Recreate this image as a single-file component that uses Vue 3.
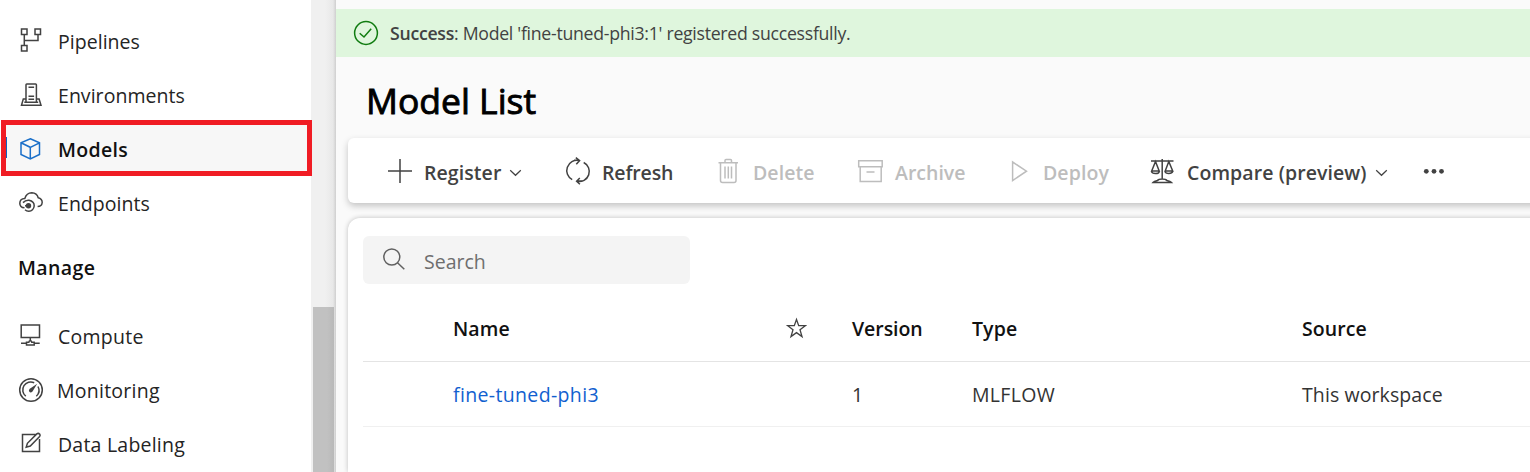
<script setup>
const nav = [
  { label: 'Pipelines', icon: 'pipelines', box: '18 14 28 54' },
  { label: 'Environments', icon: 'environments', box: '18 68 28 54' },
  { label: 'Models', icon: 'models', box: '18 122 28 54', active: true },
  { label: 'Endpoints', icon: 'endpoints', box: '18 176 28 54' },
]
const manage = [
  { label: 'Compute', icon: 'compute', box: '18 309 28 54' },
  { label: 'Monitoring', icon: 'monitoring', box: '18 363 28 54' },
  { label: 'Data Labeling', icon: 'labeling', box: '18 417 28 54' },
]
const paths = {
  pipelines: 'M21.5 29h5.5v5.5h-5.5zM35 29h5.5v5.5H35zM21.5 45.5h5.5v5.5h-5.5zM24.3 34.5v11M24.3 40.5H38v-6',
  environments: 'M26 102V84.800q0-.8.8-.8h8.800q.8 0 .8.800V102M28.500 87.200h5.600M28.500 96.200h5.600M28.500 99.200h5.600M26 99H23.300L21.500 105.300H41L39.100 99H36.400M24.300 102.300H38.200',
  models: 'M30.300 138.800L39.500 142.800V154.500L30.300 159L21 154.500V142.800zM21 142.800L30.300 147.300L39.500 142.800M30.300 147.300V159',
  compute: 'M21.200 325h18.300v12.500H21.200zM30.300 337.500v3.500M21 343.300h5.500M34.200 343.300h5.500M26.500 345V342.300h2.300q.2-1.500 1.500-1.500t1.500 1.500h2.400V345z',
  labeling: 'M36.500 434.500H22.500V451.500H39.500V439M26.200 447.200L27.400 443.300L36.800 433.900Q38.300 432.700 39.800 434.200Q40.500 435.600 39.600 436.600L30.300 446z',
}
</script>

<template>
  <div class="page">
    <aside class="side">
      <nav class="group">
        <a v-for="n in nav" :key="n.label" class="item" :class="[n.icon, { active: n.active }]">
          <svg width="28" height="54" :viewBox="n.box">
            <g v-if="n.icon === 'endpoints'">
              <path d="M24.500 207.800Q19.800 207.500 19.800 203.200Q19.900 198.800 24.800 198.500Q26.500 192.800 31.800 192.700Q37 192.900 38.200 197.700Q42.200 198.700 42.200 202.500Q41.800 206.500 37.600 206.500" />
              <path d="M23 202.600Q25.700 199.900 29 200.300Q34.300 201.300 34.200 206Q33.500 211 28.800 211.200Q26.500 211 25 209.700" />
              <path d="M25 205.800h3" />
              <circle class="dot" cx="28.500" cy="205.800" r="2.700" />
            </g>
            <path v-else :d="paths[n.icon]" />
          </svg>
          <span class="label">{{ n.label }}</span>
        </a>
      </nav>
      <h2 class="heading">Manage</h2>
      <nav class="group">
        <a v-for="n in manage" :key="n.label" class="item" :class="n.icon">
          <svg width="28" height="54" :viewBox="n.box">
            <g v-if="n.icon === 'monitoring'">
              <circle cx="31" cy="390" r="11.300" />
              <path d="M25.800 396.200A8 8 0 0 1 34.200 382.700M38 386.500A8 8 0 0 1 36.300 396.200" />
              <path class="dot" d="M37.200 383.800L32.500 391.500Q30.700 393.300 29.300 391.800Q28.200 390.300 29.800 388.800z" />
            </g>
            <path v-else :d="paths[n.icon]" />
          </svg>
          <span class="label">{{ n.label }}</span>
        </a>
      </nav>
    </aside>
    <div class="track"><div class="thumb"></div></div>

    <main class="main">
      <div class="banner">
        <svg width="26" height="26" viewBox="353 20 26 26">
          <circle cx="366" cy="33" r="11.400" />
          <path d="M359.700 33.300L364 37L371.200 28.800" />
        </svg>
        <p class="msg"><b>Success</b>: Model 'fine-tuned-phi3:1' registered successfully.</p>
      </div>
      <h1 class="title">Model List</h1>

      <div class="toolbar">
        <div class="cmd register">
          <svg width="26" height="65" viewBox="387 138 26 65"><path d="M400 159v24M388 171h24" /></svg>
          <span>Register</span>
          <svg class="chev" width="13" height="8" viewBox="0 0 13 8"><path d="M1.200 1.200L6.500 6.300L11.800 1.200" /></svg>
        </div>
        <div class="cmd refresh">
          <svg width="26" height="65" viewBox="565 138 26 65">
            <path d="M572.200 179.700A10.300 10.300 0 0 1 579 160.500M574 160.300H579.300M575.800 157.600L579.600 160.600L576.300 164.300M583.700 162.500A10.050 10.050 0 0 1 577 181.300M576.800 181H582M579.800 178L576.600 181.200L579.900 184.300" />
          </svg>
          <span>Refresh</span>
        </div>
        <div class="cmd off delete">
          <svg width="26" height="65" viewBox="717 138 26 65">
            <path d="M718.500 162.800h19.500M725 162.500v-2q0-1 1-1h4.500q1 0 1 1v2M720.500 163v17.500q0 2 2 2h11.500q2 0 2-2V163M725 166.500v12M728.300 166.500v12M731.500 166.500v12" />
          </svg>
          <span>Delete</span>
        </div>
        <div class="cmd off archive">
          <svg width="27" height="65" viewBox="857 138 27 65">
            <path d="M858.700 160.700h23.500v6h-23.500zM860.200 166.700v14.800h21v-14.800M866.500 172h8" />
          </svg>
          <span>Archive</span>
        </div>
        <div class="cmd off deploy">
          <svg width="18" height="65" viewBox="1011 138 18 65"><path d="M1012.600 162v18.500L1026.500 171.200z" /></svg>
          <span>Deploy</span>
        </div>
        <div class="cmd compare">
          <svg width="26" height="65" viewBox="1149 138 26 65">
            <path d="M1151 161h22.500M1162.200 159v20M1155.500 161.500L1151.700 171H1159.200zM1168.800 161.500L1165.200 171H1172.700zM1151.500 171.300q.5 2.200 4 2.200t3.800-2.200M1165 171.300q.5 2.200 3.800 2.200t4-2.200M1153 182.400q1-1.200 4.500-1.900q1-1.500 4.700-1.500t4.700 1.500q3.500.7 4.600 1.900z" />
          </svg>
          <span>Compare (preview)</span>
          <svg class="chev" width="13" height="8" viewBox="0 0 13 8"><path d="M1.200 1.200L6.500 6.300L11.800 1.200" /></svg>
        </div>
        <div class="cmd">
          <svg class="more" width="24" height="65" viewBox="1423 138 24 65">
            <circle cx="1426.300" cy="171.300" r="2.400" /><circle cx="1434" cy="171.300" r="2.400" /><circle cx="1441.500" cy="171.300" r="2.400" />
          </svg>
        </div>
      </div>

      <section class="panel">
        <div class="search">
          <svg width="24" height="24" viewBox="382 247 24 24">
            <circle cx="391.800" cy="257" r="8" /><path d="M397.500 262.700L404.300 269.300" />
          </svg>
          <span class="ph">Search</span>
        </div>
        <div class="row head">
          <span class="name">Name</span>
          <span class="star">
            <svg width="22" height="22" viewBox="785 317 22 22">
              <path d="M796.500 319.500L798.700 325.700H805.300L800 329.800L802 336.600L796.500 332.600L791 336.600L793 329.800L787.700 325.700H794.300z" />
            </svg>
          </span>
          <span class="version">Version</span>
          <span class="type">Type</span>
          <span class="source">Source</span>
        </div>
        <div class="row body">
          <a class="name">fine-tuned-phi3</a>
          <span></span>
          <span class="version">1</span>
          <span class="type">MLFLOW</span>
          <span class="source">This workspace</span>
        </div>
      </section>
    </main>
  </div>
</template>

<style>
body { margin: 0; overflow: hidden; }
</style>

<style scoped>
.page {
  display: flex;
  width: 1530px;
  height: 472px;
  overflow: hidden;
  background: #fff;
  font-family: "Open Sans", "Noto Sans", sans-serif;
  font-size: 19.5px;
  color: #242424;
  white-space: nowrap;
}
svg { flex: none; fill: none; stroke: #424242; stroke-width: 1.5; }
.dot { fill: #424242; stroke: none; }
.side { width: 311px; flex: none; box-sizing: border-box; padding-top: 14px; }
.item { display: flex; height: 54px; line-height: 56px; padding-left: 18px; box-sizing: border-box; }
.item .label { margin-left: 12px; letter-spacing: 0.04px; }
.item.compute .label { letter-spacing: 0.25px; }
.item.monitoring .label { margin-left: 11px; letter-spacing: 0.25px; }
.item.labeling .label { letter-spacing: 0.22px; }
.active {
  margin: -2px 0 0 1px;
  width: 311px;
  height: 56px;
  padding-left: 12px;
  border: 5px solid #f01c24;
  background: linear-gradient(#0f62be, #0f62be) 0 12px / 1px 21px no-repeat #f7f7f7;
  position: relative;
  z-index: 1;
  line-height: 50px;
  font-weight: 600;
  color: #111;
}
.item.active .label { letter-spacing: 0.3px; }
.active svg { margin-top: -3px; stroke: #1a6fc9; }
.heading { margin: 10px 0 15px 18px; font-size: 19.5px; height: 54px; line-height: 56px; font-weight: 600; color: #111; letter-spacing: 0.4px; }
.track {
  width: 25px;
  flex: none;
  background: linear-gradient(90deg, transparent 14px, #e8e8e8 22px, #cfcfcf 25px) #f0f0f0;
}
.thumb { width: 21px; height: 165px; margin: 307px 0 0 2px; background: linear-gradient(90deg, #c1c1c1 14px, #b9b9b9); }
.main { flex: 1; min-width: 0; background: #fafafa; padding-top: 9px; box-sizing: border-box; }
.banner { display: flex; align-items: center; height: 48px; padding-left: 17px; background: #dff6dd; }
.banner svg { stroke: #107c10; }
.msg { margin: 0 0 0 11px; font-size: 17.7px; color: #424242; letter-spacing: -0.28px; }
.msg b { font-weight: 600; }
.title {
  margin: 20px 0 0 30px;
  height: 61px;
  line-height: 46px;
  font-size: 35.5px;
  font-weight: 400;
  -webkit-text-stroke: 0.9px #000;
  color: #000;
  letter-spacing: 0;
}
.toolbar {
  display: grid;
  grid-template-columns: 178px 152px 140px 154px 138px 274px 60px;
  height: 65px;
  margin: 0 -12px 0 12px;
  padding-left: 39px;
  border-radius: 6px 0 0 6px;
  background: #fff;
  box-shadow: 0 3px 7px rgba(0, 0, 0, 0.22);
}
.cmd { display: flex; line-height: 69px; font-weight: 600; color: #424242; letter-spacing: 0.08px; }
.cmd span { margin-left: 11px; }
.refresh { letter-spacing: -0.15px; }
.archive { letter-spacing: 0; }
.delete span { margin-left: 10px; }
.deploy span { margin-left: 14px; }
.compare span { margin-left: 12px; }
.cmd .chev { margin: 31px 0 0 8px; stroke-width: 1.2; }
.off { color: #bdbdbd; }
.off svg { stroke: #bdbdbd; }
.more { fill: #424242; stroke: none; }
.panel {
  height: 254px;
  margin: 15px -12px 0 12px;
  padding: 18px 0 0 15px;
  box-sizing: border-box;
  border-radius: 12px 0 0 0;
  background: #fff;
  box-shadow: 0 0 5px rgba(0, 0, 0, 0.24);
}
.search { display: flex; width: 327px; height: 48px; padding-left: 19px; box-sizing: border-box; border-radius: 6px; background: #f4f4f4; line-height: 51px; color: #6e6e6e; }
.search svg { margin-top: 11px; stroke: #616161; }
.ph { margin-left: 18px; letter-spacing: 0; }
.row { display: grid; grid-template-columns: 332px 67px 120px 330px 1fr; padding-left: 90px; letter-spacing: 0.1px; }
.head { height: 62px; margin-top: 15px; line-height: 60px; font-weight: 600; color: #111; border-bottom: 1px solid #e4e4e4; }
.head .version { letter-spacing: -0.05px; }
.body { height: 64px; line-height: 65px; color: #333; border-bottom: 1px solid #f0f0f0; }
.body .type { letter-spacing: 0.3px; }
.body a { color: #1160cf; letter-spacing: 0.35px; }
.star svg { display: block; margin-top: 18px; stroke-width: 1.3; }
</style>
